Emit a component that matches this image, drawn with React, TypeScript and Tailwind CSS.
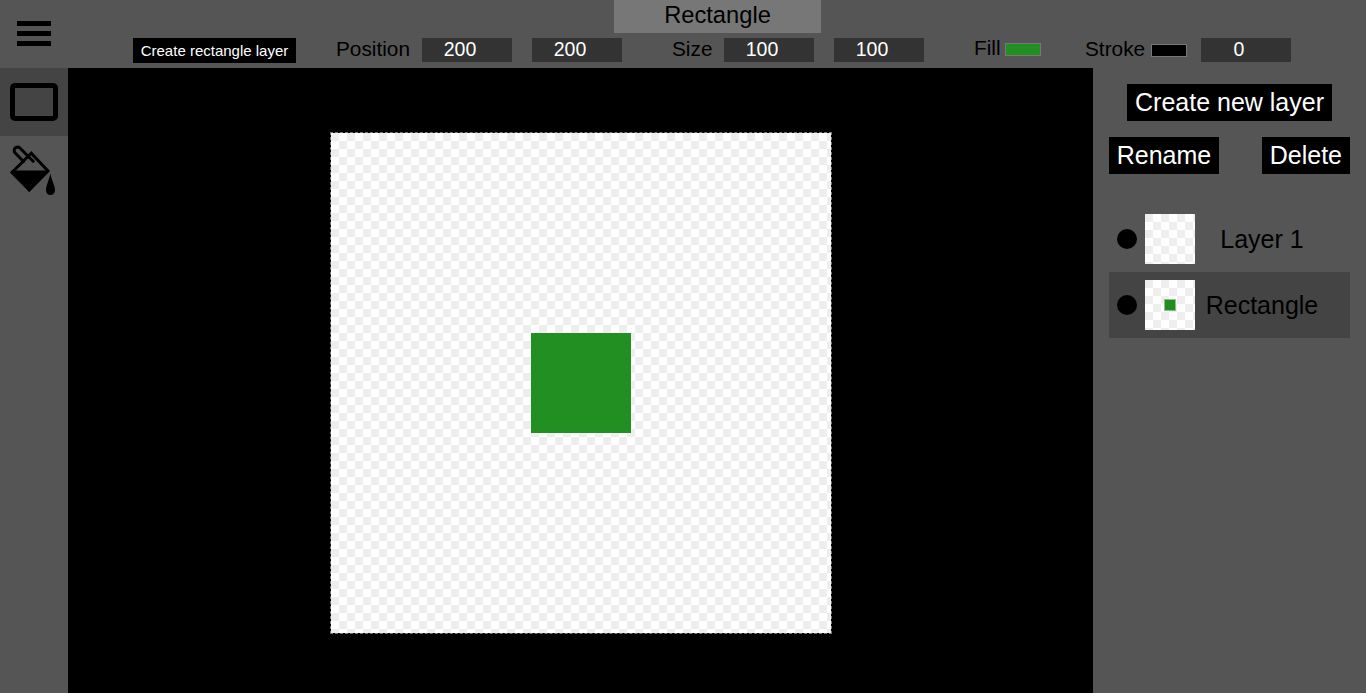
import React from "react";

const checker =
  "bg-[conic-gradient(#fff_25%,#eee_0_50%,#fff_0_75%,#eee_0)] bg-[length:16px_16px]";

function NumberField({ value, className = "" }: { value: number; className?: string }) {
  return (
    <div className={`h-6 w-[90px] shrink-0 bg-[#333] text-[19.5px] leading-[22px] text-white ${className}`}>
      <div className="w-[76px] text-center">{value}</div>
    </div>
  );
}

function Swatch({ className }: { className: string }) {
  return <div className={`h-[13px] w-9 shrink-0 border border-[#777] ${className}`} />;
}

function Label({ children, className = "" }: { children: React.ReactNode; className?: string }) {
  return <span className={`shrink-0 text-[20.8px] leading-[22px] whitespace-nowrap ${className}`}>{children}</span>;
}

function Layer({ name, selected = false }: { name: string; selected?: boolean }) {
  return (
    <div className={`flex h-[66px] items-center p-2 ${selected ? "bg-[#444]" : ""}`}>
      <div className="size-5 shrink-0 rounded-full bg-black" />
      <div className={`ml-2 flex size-[50px] shrink-0 items-center justify-center ${checker}`}>
        {selected && <div className="size-[10px] bg-[#228b22] outline outline-[#228b22]/50" />}
      </div>
      <div className="w-[134px] shrink-0 text-center text-[25px] leading-[29px]">{name}</div>
    </div>
  );
}

export default function App() {
  return (
    <div className="flex h-[693px] w-[1366px] flex-col overflow-hidden bg-[#555] font-['Liberation_Sans',Arial,sans-serif] text-black">
      <header className="flex h-[68px] shrink-0">
        <button className="flex h-[68px] w-[68px] flex-col items-center gap-[5px] pt-[21px]" aria-label="Menu">
          <span className="h-[5px] w-[34px] bg-black" />
          <span className="h-[5px] w-[34px] bg-black" />
          <span className="h-[5px] w-[34px] bg-black" />
        </button>
        <div className="flex flex-1 flex-col">
          <div className="ml-[546px] h-[33px] w-[207px] bg-[#777] pt-px text-center text-[23.7px] leading-[28px]">Rectangle</div>
          <div className="mt-[5px] flex items-start">
            <button className="ml-[65px] h-[25px] w-[163px] bg-black text-[15px] leading-[25px] whitespace-nowrap text-white">
              Create rectangle layer
            </button>
            <Label className="ml-10 w-[86px]">Position</Label>
            <NumberField value={200} />
            <NumberField value={200} className="ml-5" />
            <Label className="ml-[50px] w-[52px]">Size</Label>
            <NumberField value={100} />
            <NumberField value={100} className="ml-5" />
            <Label className="-mt-px ml-[50px] w-[31px]">Fill</Label>
            <Swatch className="mt-[5px] bg-[#228f22]" />
            <Label className="ml-11 w-[66px]">Stroke</Label>
            <Swatch className="mt-[6px] bg-black" />
            <NumberField value={0} className="ml-[14px]" />
          </div>
        </div>
      </header>
      <div className="flex min-h-0 flex-1">
        <nav className="w-[68px] shrink-0">
          <button className="flex size-[68px] items-center justify-center bg-[#444]" aria-label="Rectangle">
            <span className="h-[38px] w-12 rounded-[5px] border-[5px] border-black" />
          </button>
          <button className="block size-[68px]" aria-label="Fill">
            <svg width="68" height="68" viewBox="0 136 68 68" fill="none" stroke="#000">
              <path d="M31.2 153.2 12 172.5 29.2 189.8 48 171Z" strokeWidth="3" />
              <path d="M11 170.5H49L29.2 192Z" fill="#000" stroke="none" />
              <path d="M23.5 161.5 15.2 153A3.3 3.3 0 0 1 19.9 148L33.2 161.3" strokeWidth="3" strokeLinecap="round" />
              <path d="M50.3 173.5C49 180 46 186 46 190.3C46 193.4 47.8 195 50.4 195S55 193.4 55 190.3C55 186 51.7 180 50.3 173.5Z" fill="#000" stroke="none" />
            </svg>
          </button>
        </nav>
        <main className="w-[1025px] shrink-0 bg-black pt-16 pl-[262px]">
          <div className="size-[502px] border border-dashed border-[#777] bg-black">
            <div className={`flex size-[500px] items-center justify-center ${checker}`}>
              <div className="size-[100px] bg-[#228f22]" />
            </div>
          </div>
        </main>
        <aside className="flex-1 px-4 pt-4">
          <div className="flex justify-center">
            <button className="h-[37px] bg-black px-2 text-[25px] leading-[37px] whitespace-nowrap text-white">Create new layer</button>
          </div>
          <div className="mt-4 flex justify-between">
            <button className="h-[37px] w-[110px] bg-black text-[25px] leading-[37px] text-white">Rename</button>
            <button className="h-[37px] bg-black px-2 text-[25px] leading-[37px] text-white">Delete</button>
          </div>
          <div className="mt-8">
            <Layer name="Layer 1" />
            <Layer name="Rectangle" selected />
          </div>
        </aside>
      </div>
    </div>
  );
}
